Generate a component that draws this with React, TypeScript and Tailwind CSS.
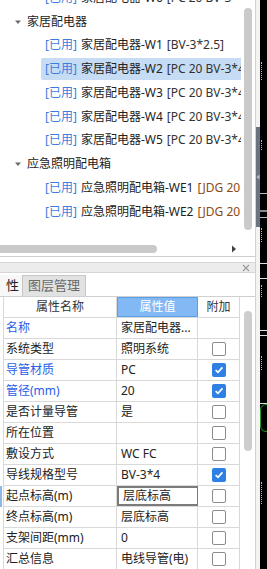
const FONT = { fontFamily: '"Noto Sans", "Noto Sans CJK SC", sans-serif' };

type TreeRow =
  | { kind: "group"; label: string }
  | { kind: "item"; name: string; spec: string; brown?: boolean; selected?: boolean };

const treeRows: TreeRow[] = [
  { kind: "item", name: "家居配电器-W6", spec: "[PC 20 BV-3*4]" },
  { kind: "group", label: "家居配电器" },
  { kind: "item", name: "家居配电器-W1", spec: "[BV-3*2.5]" },
  { kind: "item", name: "家居配电器-W2", spec: "[PC 20 BV-3*4]", selected: true },
  { kind: "item", name: "家居配电器-W3", spec: "[PC 20 BV-3*4]" },
  { kind: "item", name: "家居配电器-W4", spec: "[PC 20 BV-3*4]" },
  { kind: "item", name: "家居配电器-W5", spec: "[PC 20 BV-3*4]" },
  { kind: "group", label: "应急照明配电箱" },
  { kind: "item", name: "应急照明配电箱-WE1", spec: "[JDG 20 BV-3*2.5]", brown: true },
  { kind: "item", name: "应急照明配电箱-WE2", spec: "[JDG 20 BV-3*2.5]", brown: true },
];

type Prop = { name: string; value: string; blue?: boolean; check?: boolean | null; editing?: boolean };

const props: Prop[] = [
  { name: "名称", value: "家居配电器...", blue: true, check: null },
  { name: "系统类型", value: "照明系统", check: false },
  { name: "导管材质", value: "PC", blue: true, check: true },
  { name: "管径(mm)", value: "20", blue: true, check: true },
  { name: "是否计量导管", value: "是", check: false },
  { name: "所在位置", value: "", check: false },
  { name: "敷设方式", value: "WC FC", check: false },
  { name: "导线规格型号", value: "BV-3*4", check: true },
  { name: "起点标高(m)", value: "层底标高", check: false, editing: true },
  { name: "终点标高(m)", value: "层底标高", check: false },
  { name: "支架间距(mm)", value: "0", check: false },
  { name: "汇总信息", value: "电线导管(电)", check: false },
];

function Caret() {
  return (
    <svg width="8" height="6" viewBox="0 0 8 6" className="shrink-0">
      <path d="M1 1.5 L7 1.5 L4 5 Z" fill="#6b6b6b" />
    </svg>
  );
}

function CheckBox({ on }: { on: boolean }) {
  if (on) {
    return (
      <div className="w-[14px] h-[14px] rounded-[2px] bg-[#2f80e4] flex items-center justify-center">
        <svg width="10" height="10" viewBox="0 0 10 10">
          <path d="M1.6 5.2 L4 7.4 L8.4 2.4" stroke="#fff" strokeWidth="1.7" fill="none" />
        </svg>
      </div>
    );
  }
  return <div className="w-[14px] h-[14px] rounded-[2px] border border-[#8c8c8c] bg-white" />;
}

export default function App() {
  return (
    <div className="w-[267px] h-[569px] overflow-hidden flex bg-black text-[12px] text-[#222]" style={FONT}>
      {/* left side: tree + property panel */}
      <div className="w-[255px] shrink-0 flex flex-col bg-white">
        {/* tree */}
        <div className="h-[257px] shrink-0 flex flex-col border-b border-[#cfcfcf]">
          <div className="flex flex-1 min-h-0">
            <div className="w-[241px] overflow-hidden">
              <div className="-mt-[14px]">
                {treeRows.map((r, i) =>
                  r.kind === "group" ? (
                    <div key={i} className="h-[23.75px] flex items-center gap-[5px] pl-[14px] whitespace-nowrap">
                      <Caret />
                      <span className="text-[#222]">{r.label}</span>
                    </div>
                  ) : (
                    <div key={i} className="h-[23.75px] flex items-center pl-[41px]">
                      <div
                        className={
                          "h-[22px] flex-1 flex items-center pl-[4px] whitespace-nowrap overflow-hidden rounded-l-[2px] " +
                          (r.selected ? "bg-[#c6dcf4]" : "")
                        }
                      >
                        <span className="text-[#3b7ddd]">[已用]</span>
                        <span className="ml-[4px]">{r.name}</span>
                        <span className={"ml-[4px] " + (r.brown ? "text-[#8a4b12]" : "text-[#333]")}>{r.spec}</span>
                      </div>
                    </div>
                  )
                )}
              </div>
            </div>
            <div className="flex-1 flex justify-center">
              <div className="mt-[8px] w-[8px] h-[222px] rounded-full bg-[#cacaca]" />
            </div>
          </div>
          <div className="h-[14px] shrink-0 flex items-center">
            <div className="w-[157px] h-[8px] rounded-r-full bg-[#cacaca]" />
            <div className="flex-1" />
            <svg width="6" height="8" viewBox="0 0 6 8" className="mr-[18px]">
              <path d="M1 0.5 L5 4 L1 7.5 Z" fill="#444" />
            </svg>
          </div>
        </div>

        {/* panel title bar */}
        <div className="h-[5px] shrink-0 bg-white" />
        <div className="h-[11px] shrink-0 bg-[#ececec] border-y border-[#d6d6d6] flex items-center justify-end pr-[5px]">
          <svg width="8" height="8" viewBox="0 0 8 8">
            <path d="M1 1 L7 7 M7 1 L1 7" stroke="#9a9a9a" strokeWidth="1.1" />
          </svg>
        </div>

        {/* tabs */}
        <div className="h-[24px] shrink-0 flex items-stretch pt-[2px] border-b border-[#d0d0d0] bg-white">
          <div className="w-[22px] flex items-center justify-end pr-[3px] bg-[#f7f7f7] text-[13px] text-[#222]">性</div>
          <div className="w-[64px] flex items-center justify-center bg-[#e2e2e2] border border-b-0 border-[#c6c6c6] text-[13px] text-[#6a6a6a]">
            图层管理
          </div>
        </div>

        {/* property table */}
        <div className="flex flex-1 min-h-0">
          <div className="w-[3px] shrink-0 flex flex-col">
            <div className="h-[189px]" />
            <div className="h-[21px] w-[2px] bg-[#8db9ea]" />
          </div>
          <div className="w-[237px] shrink-0 border-l border-r border-[#d9d9d9]">
            <div className="grid grid-cols-[113px_81px_41px] h-[21px] border-b border-[#d9d9d9]">
              <div className="flex items-center justify-center border-r border-[#d9d9d9] text-[#333]">属性名称</div>
              <div className="flex items-center justify-center bg-[#82b9f4] border border-[#5b9fe8] text-white">属性值</div>
              <div className="flex items-center justify-center text-[#333]">附加</div>
            </div>
            {props.map((p) => (
              <div key={p.name} className="grid grid-cols-[113px_81px_41px] h-[21px] border-b border-[#d9d9d9]">
                <div className={"flex items-center pl-[2px] border-r border-[#d9d9d9] whitespace-nowrap " + (p.blue ? "text-[#2a5ee8]" : "text-[#222]")}>
                  {p.name}
                </div>
                <div
                  className={
                    "flex items-center pl-[4px] border-r whitespace-nowrap overflow-hidden " +
                    (p.editing ? "border-2 border-[#7b7b7b] pl-[2px]" : "border-[#d9d9d9]")
                  }
                >
                  {p.value}
                </div>
                <div className="flex items-center justify-center">
                  {p.check === null || p.check === undefined ? null : <CheckBox on={p.check} />}
                </div>
              </div>
            ))}
          </div>
          <div className="flex-1 flex justify-center">
            <div className="mt-[14px] w-[8px] h-[140px] rounded-full bg-[#cdcdcd]" />
          </div>
        </div>
      </div>

      {/* splitter */}
      <div className="w-[1px] shrink-0 bg-[#d2d2d2]" />
      <div className="w-[4px] shrink-0 bg-[#f3f3f3] flex flex-col">
        <div className="h-[127px]" />
        <div className="h-[100px] bg-[#6b7581] flex items-center justify-center">
          <svg width="4" height="6" viewBox="0 0 4 6">
            <path d="M3.5 0.5 L0.5 3 L3.5 5.5 Z" fill="#b8c0c8" />
          </svg>
        </div>
      </div>

      {/* drawing canvas */}
      <div className="relative flex-1 bg-black">
        <div className="absolute left-0 right-0 top-[193px] h-[1px] bg-[#bdbdbd]" />
        <div className="absolute left-0 right-0 top-[210px] h-[2px] bg-[#8a8a8a]" />
        <div className="absolute left-0 right-0 top-[217px] h-[1px] bg-[#bdbdbd]" />
        <div className="absolute left-0 right-0 top-[263px] h-[1px] bg-[#e0e0e0]" />
        <div className="absolute left-0 right-0 top-[278px] h-[1px] bg-[#e0e0e0]" />
        <div className="absolute left-0 right-0 top-[330px] h-[1px] bg-[#e0e0e0]" />
        <div className="absolute left-0 right-0 top-[335px] h-[1px] bg-[#e0e0e0]" />
        <div className="absolute left-0 right-0 top-[403px] h-[1px] bg-[#e0e0e0]" />
        <div className="absolute left-0 top-[404px] w-[12px] h-[28px] rounded-full border border-[#1f9a2a]" />
        <div className="absolute left-[1px] top-[62px] w-[1px] h-[18px] border-l border-dotted border-[#bbb]" />
        <div className="absolute left-[1px] top-[140px] w-[1px] h-[10px] border-l border-dotted border-[#bbb]" />
        <div className="absolute left-[1px] top-[228px] w-[1px] h-[14px] border-l border-dotted border-[#bbb]" />
        <div className="absolute left-[1px] top-[285px] w-[1px] h-[12px] border-l border-dotted border-[#bbb]" />
        <div className="absolute left-[1px] top-[356px] w-[1px] h-[14px] border-l border-dotted border-[#bbb]" />
        <div className="absolute left-[1px] top-[482px] w-[1px] h-[22px] border-l border-dotted border-[#bbb]" />
      </div>
    </div>
  );
}
